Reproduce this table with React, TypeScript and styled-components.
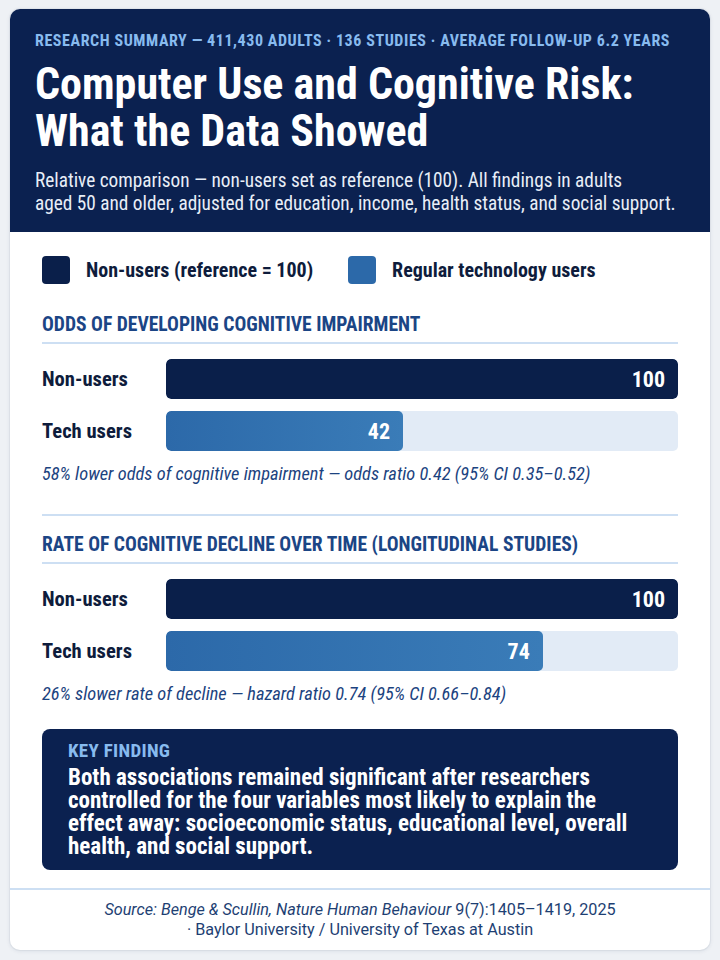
import React from "react";
import styled, { createGlobalStyle } from "styled-components";

const NARROW = '"Roboto Condensed", "Liberation Sans Narrow", Roboto, "Liberation Sans", sans-serif';
const REGULAR = 'Roboto, "Liberation Sans", Arial, sans-serif';

const C = {
  page: "#eef1f5",
  navy: "#0b2150",
  bar: "#0a1f4a",
  blue: "#2c69a9",
  blueEnd: "#3a7cb8",
  track: "#e2ebf6",
  kicker: "#88bbef",
  heading: "#1b4585",
  note: "#1c4380",
  ink: "#0e1c3c",
  rule: "#cddff3",
};

const GlobalStyle = createGlobalStyle`
  html, body { margin: 0; padding: 0; background: ${C.page}; }
  body { font-family: ${NARROW}; -webkit-font-smoothing: antialiased; }
  * { box-sizing: border-box; }
`;

const Page = styled.div`
  padding: 9px 10px 10px;
`;

const Card = styled.article`
  width: 700px;
  background: #ffffff;
  border-radius: 10px;
  overflow: hidden;
  box-shadow: 0 1px 4px rgba(20, 40, 80, 0.1), 0 0 0 1px rgba(20, 40, 80, 0.04);
`;

const Header = styled.header`
  background: ${C.navy};
  padding: 22px 25px 17px;
`;

const Kicker = styled.div`
  color: ${C.kicker};
  font-size: 16px;
  line-height: 20px;
  font-weight: 700;
  letter-spacing: 0.58px;
  text-transform: uppercase;
  white-space: nowrap;
`;

const Title = styled.h1`
  margin: 10px 0 0;
  color: #ffffff;
  font-size: 44px;
  line-height: 47px;
  font-weight: 700;
`;

const Desc = styled.p`
  margin: 14px 0 0;
  color: #e8eef7;
  font-size: 19.3px;
  line-height: 23px;
  font-weight: 400;
`;

const Body = styled.div`
  padding: 24px 32px 18px;
`;

const Legend = styled.div`
  display: flex;
  align-items: center;
  gap: 35px;
`;

const LegendItem = styled.div`
  display: flex;
  align-items: center;
  gap: 16px;
  color: ${C.ink};
  font-size: 20px;
  line-height: 28px;
  font-weight: 700;
`;

const Swatch = styled.span<{ $color: string }>`
  width: 28px;
  height: 28px;
  border-radius: 4px;
  background: ${(p) => p.$color};
  flex: none;
`;

const Section = styled.section<{ $first?: boolean }>`
  margin-top: ${(p) => (p.$first ? "30px" : "0")};
  padding: ${(p) => (p.$first ? "0 0 29px" : "18px 0 0")};
  border-bottom: ${(p) => (p.$first ? `2px solid ${C.rule}` : "none")};
`;

const SectionTitle = styled.h2`
  margin: 0;
  color: ${C.heading};
  font-size: 19.6px;
  line-height: 22px;
  font-weight: 700;
  text-transform: uppercase;
  padding-bottom: 6px;
  border-bottom: 2px solid ${C.rule};
`;

const Rows = styled.div`
  margin-top: 15px;
  display: flex;
  flex-direction: column;
  gap: 12px;
`;

const Row = styled.div`
  display: grid;
  grid-template-columns: 124px 1fr;
  align-items: center;
`;

const RowLabel = styled.div`
  color: ${C.ink};
  font-size: 20.6px;
  font-weight: 700;
`;

const Track = styled.div`
  height: 40px;
  border-radius: 5px;
  background: ${C.track};
  overflow: hidden;
  display: flex;
`;

const Fill = styled.div<{ $kind: "ref" | "tech" }>`
  height: 100%;
  border-radius: 5px;
  background: ${(p) =>
    p.$kind === "ref" ? C.bar : `linear-gradient(90deg, ${C.blue}, ${C.blueEnd})`};
  display: flex;
  align-items: center;
  justify-content: flex-end;
  padding-right: 13px;
  color: #ffffff;
  font-size: 22px;
  font-weight: 700;
`;

const Note = styled.p`
  margin: 12px 0 0;
  color: ${C.note};
  font-size: 18.4px;
  line-height: 22px;
  font-style: italic;
`;

const KeyBox = styled.div`
  margin-top: 24px;
  background: ${C.navy};
  border-radius: 8px;
  padding: 11px 34px 12px 26px;
`;

const KeyLabel = styled.div`
  color: ${C.kicker};
  font-size: 19px;
  line-height: 22px;
  font-weight: 700;
  letter-spacing: 0.3px;
`;

const KeyText = styled.p`
  margin: 4px 0 0;
  color: #ffffff;
  font-size: 23px;
  line-height: 23px;
  font-weight: 700;
`;

const Footer = styled.footer`
  border-top: 2px solid ${C.rule};
  padding: 10px 20px 10px;
  text-align: center;
  color: #1e3f73;
  font-family: ${REGULAR};
  font-size: 16.2px;
  line-height: 20px;
`;

const Em = styled.em`
  font-style: italic;
`;

type Bar = { label: string; value: number; width: number; kind: "ref" | "tech" };
type Chart = { title: string; note: string; bars: Bar[] };

const charts: Chart[] = [
  {
    title: "Odds of developing cognitive impairment",
    note: "58% lower odds of cognitive impairment — odds ratio 0.42 (95% CI 0.35–0.52)",
    bars: [
      { label: "Non-users", value: 100, width: 100, kind: "ref" },
      { label: "Tech users", value: 42, width: 46.3, kind: "tech" },
    ],
  },
  {
    title: "Rate of cognitive decline over time (longitudinal studies)",
    note: "26% slower rate of decline — hazard ratio 0.74 (95% CI 0.66–0.84)",
    bars: [
      { label: "Non-users", value: 100, width: 100, kind: "ref" },
      { label: "Tech users", value: 74, width: 73.6, kind: "tech" },
    ],
  },
];

export default function App() {
  return (
    <>
      <GlobalStyle />
      <Page>
        <Card>
          <Header>
            <Kicker>
              Research summary — 411,430 adults · 136 studies · average follow-up 6.2 years
            </Kicker>
            <Title>
              Computer Use and Cognitive Risk:
              <br />
              What the Data Showed
            </Title>
            <Desc>
              Relative comparison — non-users set as reference (100). All findings in adults
              <br />
              aged 50 and older, adjusted for education, income, health status, and social support.
            </Desc>
          </Header>
          <Body>
            <Legend>
              <LegendItem>
                <Swatch $color={C.bar} />
                Non-users (reference = 100)
              </LegendItem>
              <LegendItem>
                <Swatch $color={C.blue} />
                Regular technology users
              </LegendItem>
            </Legend>
            {charts.map((c, i) => (
              <Section key={c.title} $first={i === 0}>
                <SectionTitle>{c.title}</SectionTitle>
                <Rows>
                  {c.bars.map((b) => (
                    <Row key={b.label}>
                      <RowLabel>{b.label}</RowLabel>
                      <Track>
                        <Fill $kind={b.kind} style={{ width: `${b.width}%` }}>
                          {b.value}
                        </Fill>
                      </Track>
                    </Row>
                  ))}
                </Rows>
                <Note>{c.note}</Note>
              </Section>
            ))}
            <KeyBox>
              <KeyLabel>KEY FINDING</KeyLabel>
              <KeyText>
                Both associations remained significant after researchers controlled for the four
                variables most likely to explain the effect away: socioeconomic status, educational
                level, overall health, and social support.
              </KeyText>
            </KeyBox>
          </Body>
          <Footer>
            <Em>Source: Benge &amp; Scullin, Nature Human Behaviour</Em> 9(7):1405–1419, 2025
            <br />· Baylor University / University of Texas at Austin
          </Footer>
        </Card>
      </Page>
    </>
  );
}
